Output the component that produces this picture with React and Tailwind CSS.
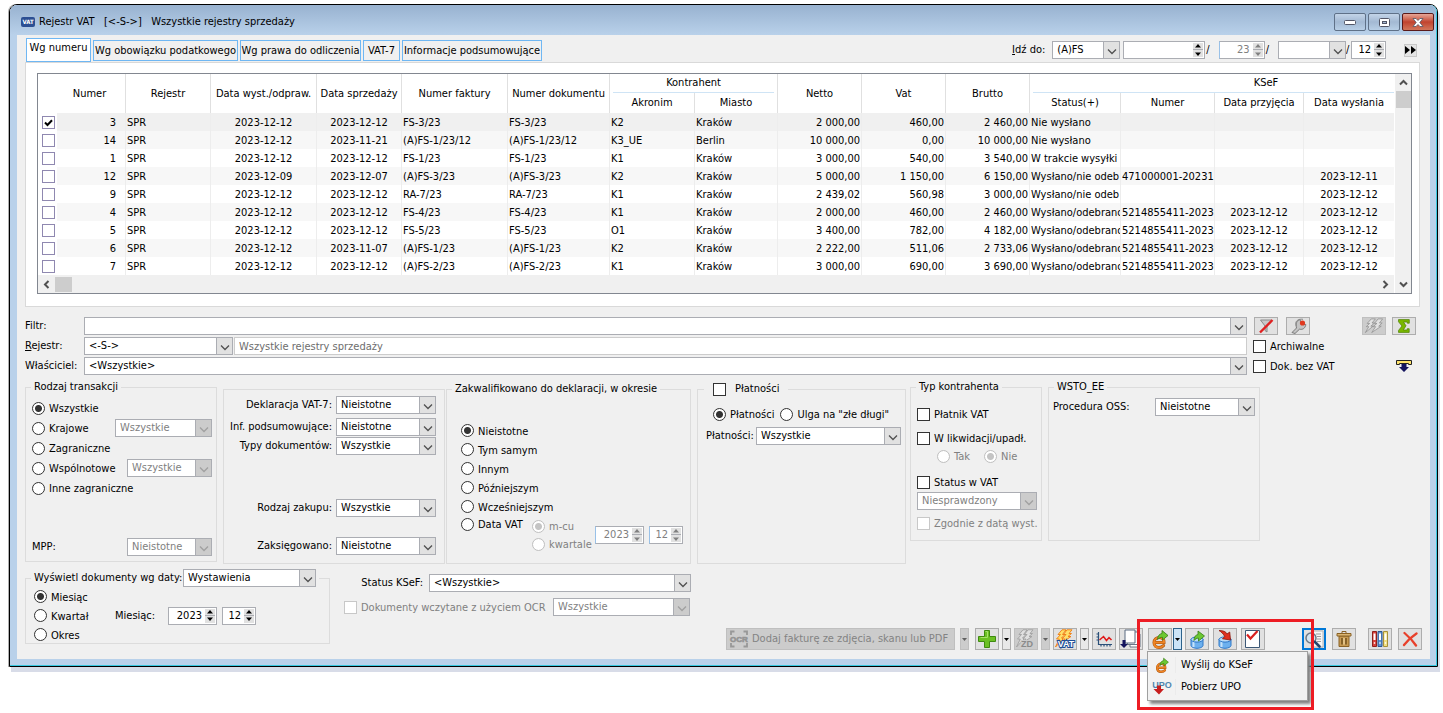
import React from "react";

const ROWS = [
  ["3", "SPR", "2023-12-12", "2023-12-12", "FS-3/23", "FS-3/23", "K2", "Kraków", "2 000,00", "460,00", "2 460,00", "Nie wysłano", "", "", ""],
  ["14", "SPR", "2023-12-12", "2023-11-21", "(A)FS-1/23/12", "(A)FS-1/23/12", "K3_UE", "Berlin", "10 000,00", "0,00", "10 000,00", "Nie wysłano", "", "", ""],
  ["1", "SPR", "2023-12-12", "2023-12-12", "FS-1/23", "FS-1/23", "K1", "Kraków", "3 000,00", "540,00", "3 540,00", "W trakcie wysyłki", "", "", ""],
  ["12", "SPR", "2023-12-09", "2023-12-07", "(A)FS-3/23", "(A)FS-3/23", "K2", "Kraków", "5 000,00", "1 150,00", "6 150,00", "Wysłano/nie odeb", "471000001-20231", "", "2023-12-11"],
  ["9", "SPR", "2023-12-12", "2023-12-12", "RA-7/23", "RA-7/23", "K1", "Kraków", "2 439,02", "560,98", "3 000,00", "Wysłano/nie odeb", "", "", "2023-12-12"],
  ["4", "SPR", "2023-12-12", "2023-12-12", "FS-4/23", "FS-4/23", "K1", "Kraków", "2 000,00", "460,00", "2 460,00", "Wysłano/odebrano", "5214855411-2023", "2023-12-12", "2023-12-12"],
  ["5", "SPR", "2023-12-12", "2023-12-12", "FS-5/23", "FS-5/23", "O1", "Kraków", "3 400,00", "782,00", "4 182,00", "Wysłano/odebrano", "5214855411-2023", "2023-12-12", "2023-12-12"],
  ["6", "SPR", "2023-12-12", "2023-11-07", "(A)FS-1/23", "(A)FS-1/23", "K2", "Kraków", "2 222,00", "511,06", "2 733,06", "Wysłano/odebrano", "5214855411-2023", "2023-12-12", "2023-12-12"],
  ["7", "SPR", "2023-12-12", "2023-12-12", "(A)FS-2/23", "(A)FS-2/23", "K1", "Kraków", "3 000,00", "690,00", "3 690,00", "Wysłano/odebrano", "5214855411-2023", "2023-12-12", "2023-12-12"],
];

const CELL = [
  "text-right pr-[9px]",
  "pl-px",
  "text-center",
  "text-center",
  "pl-px",
  "pl-px",
  "pl-px",
  "pl-px",
  "text-right pr-px",
  "text-right pr-px",
  "text-right pr-px",
  "pl-px",
  "pl-px",
  "text-center",
  "text-center",
];

function Chevron({ className = "" }) {
  return (
    <svg viewBox="0 0 10 7" className={`w-[10px] ${className}`} fill="none" stroke="currentColor" strokeWidth="1.3" aria-hidden="true">
      <path d="M1 1.500 5 5.500 9 1.500" />
    </svg>
  );
}

function Select({ value, label, id, className = "", disabled = false }) {
  return (
    <span className={`relative block shrink-0 ${className}`}>
      <select
        id={id}
        aria-label={label}
        disabled={disabled}
        defaultValue={value}
        className="block h-[18px] w-full appearance-none border border-[#abadb3] bg-white pr-4 pl-1 leading-4 text-black opacity-100 outline-none disabled:text-[#808080]"
      >
        <option>{value}</option>
      </select>
      <span
        className={`pointer-events-none absolute inset-y-0 right-0 flex w-[17px] items-center justify-center border border-[#abadb3] ${
          disabled ? "bg-[#cccccc] text-[#a0a0a0]" : "bg-[#e1e1e1] text-[#505050]"
        }`}
      >
        <Chevron className="mt-0.5" />
      </span>
    </span>
  );
}

function Spinner({ value = "", label, className = "", disabled = false }) {
  return (
    <span
      className={`flex h-[18px] shrink-0 border bg-white ${className} ${
        disabled ? "border-[#abadb3] border-l-[#99c1e8] text-[#808080]" : "border-[#abadb3] text-black"
      }`}
    >
      <input
        type="text"
        aria-label={label}
        defaultValue={value}
        disabled={disabled}
        className="min-w-0 flex-1 bg-transparent pr-[3px] text-right outline-none"
      />
      <span className="my-px mr-px grid w-[10px] grid-rows-2 bg-[#e1e1e1]">
        <button type="button" aria-label={`${label}: więcej`} disabled={disabled} className="flex items-center justify-center border-b border-[#abadb3]">
          <svg viewBox="0 0 6 4" className="w-[6px]" fill="currentColor"><path d="M3 0 6 3.500H0z" /></svg>
        </button>
        <button type="button" aria-label={`${label}: mniej`} disabled={disabled} className="flex items-center justify-center">
          <svg viewBox="0 0 6 4" className="w-[6px]" fill="currentColor"><path d="M3 4 0 .5h6z" /></svg>
        </button>
      </span>
    </span>
  );
}

function Radio({ name, children, checked = false, disabled = false, className = "" }) {
  return (
    <label className={`flex items-center gap-1 whitespace-nowrap ${disabled ? "text-[#808080]" : ""} ${className}`}>
      <input
        type="radio"
        name={name}
        defaultChecked={checked}
        disabled={disabled}
        className="size-[13px] shrink-0 appearance-none rounded-full border border-[#333333] bg-white bg-clip-padding checked:bg-[radial-gradient(circle,#333333_0_3px,#ffffff_4px)] disabled:border-[#c0c0c0] disabled:checked:bg-[radial-gradient(circle,#c4c4c4_0_3px,#ffffff_4px)]"
      />
      <span className="pt-0.5">{children}</span>
    </label>
  );
}

function Check({ children, disabled = false, className = "" }) {
  return (
    <label className={`flex items-center gap-1 whitespace-nowrap ${disabled ? "text-[#808080]" : ""} ${className}`}>
      <input
        type="checkbox"
        disabled={disabled}
        className="size-[13px] shrink-0 appearance-none border border-[#333333] bg-white disabled:border-[#c8c8c8]"
      />
      <span className="pt-0.5">{children}</span>
    </label>
  );
}

function Group({ legend, className = "", children }) {
  return (
    <fieldset className={`shrink-0 border border-[#dcdcdc] ${className}`}>
      <legend className="ml-[5px] px-[3px] leading-[14px]">{legend}</legend>
      {children}
    </fieldset>
  );
}

function ToolButton({ label, children, className = "border border-[#adadad] bg-[#e1e1e1]", small = false, ...rest }) {
  return (
    <button
      type="button"
      aria-label={label}
      className={`flex shrink-0 items-center justify-center overflow-hidden ${small ? "h-[18px]" : "h-[22px]"} w-6 ${className}`}
      {...rest}
    >
      {children}
    </button>
  );
}

function DropButton({ label, className = "border-[#adadad] bg-[#e8e8e8]", disabled = false }) {
  return (
    <button
      type="button"
      aria-label={label}
      disabled={disabled}
      className={`flex h-[22px] w-[9px] shrink-0 items-center justify-center border ${className}`}
    >
      <svg viewBox="0 0 5 3" className="w-[5px]" fill="currentColor"><path d="M0 0h5L2.500 3z" /></svg>
    </button>
  );
}

function EArrow({ className }) {
  return (
    <svg viewBox="0 0 20 20" className={`shrink-0 ${className}`} aria-hidden="true">
      <path d="M4.500 13.500H14c.2-3.200-1.800-5-4.700-5-3 0-5.300 2-5.300 5s2 5 5 5c2 0 3.600-.7 4.600-2" fill="none" stroke="#a8520e" strokeWidth="3" strokeLinecap="round" />
      <path d="M4.500 13.500H14c.2-3.200-1.800-5-4.700-5-3 0-5.300 2-5.300 5s2 5 5 5c2 0 3.600-.7 4.600-2" fill="none" stroke="#ee8424" strokeWidth="2" strokeLinecap="round" />
      <path d="M7.500 10.500C7.800 6.800 9.200 5 12 4.500V1.500l6 5-5.500 4.500V8.300c-1.900 0-3.300.6-5 2.200z" fill="#6cc832" stroke="#347a12" strokeWidth=".8" />
    </svg>
  );
}

function Cylinder({ red = false }) {
  return (
    <svg viewBox="0 0 22 20" className="w-[22px]" aria-hidden="true">
      <path d="M5 10v6.500C5 18 8 19.300 11 19.300s6-1.300 6-2.800V10z" fill="#6db0ee" stroke="#2f78c8" />
      <path d="M7.500 12v6" stroke="#c6e2fb" strokeWidth="2" />
      <ellipse cx="11" cy="10.500" rx="6" ry="2.600" fill="#b9dbf8" stroke="#2f78c8" />
      {red ? (
        <path d="M5 1.500C9 1.500 12 2.500 13 5l2.700-2L16.500 11l-8-1.200 2.200-2.300C9.500 5 7.500 3 5 1.500z" fill="#e03020" stroke="#8a1408" strokeWidth=".8" />
      ) : (
        <path d="M8 11.500c0-3.500 1.300-5.300 4-6V2l6.500 5-6 5V9.200c-1.800 0-3 .6-4.500 2.300z" fill="#6cc832" stroke="#347a12" strokeWidth=".8" />
      )}
    </svg>
  );
}

function Bolts({ front, edge, className }) {
  return (
    <svg viewBox="0 0 22 18" className={className} aria-hidden="true">
      <path d="M8 1 3.500 6h2.700L2.500 9.500h2.800L1.500 16 10 9H7.500l4-3.500H8.800L12.500 1z" fill={front} stroke={edge} strokeWidth=".8" />
      <path d="M15.500 1 11.500 6h2.700L10 9.500h2.800L8.500 16 19 9h-2.800L20 5.500h-3L20.500 1z" fill={front} stroke={edge} strokeWidth=".8" />
    </svg>
  );
}

function BoltText({ text, bolt, edge, fill, outline }) {
  return (
    <svg viewBox="0 0 22 20" className="w-[22px]" aria-hidden="true">
      <path d="M8 .8 4 5.500h2.500L2.500 10h2.800L1.500 18 10 9H7.500L11 5.500H8.500L12 .8z" fill={bolt} stroke={edge} strokeWidth=".9" />
      <path d="M13 .8 9.500 5.500H12L8 10h3L9 13l8-5.500h-3l3.500-3H15L18 .8z" fill={bolt} stroke={edge} strokeWidth=".9" />
      <text x="12" y="18" textAnchor="middle" fontSize="9" fontWeight="bold" fontFamily="Liberation Sans, sans-serif" fill={fill} stroke={outline} strokeWidth="2" paintOrder="stroke">
        {text}
      </text>
    </svg>
  );
}

function TitleBar() {
  const btn = "flex h-[18px] w-8 items-center justify-center rounded-[2px] border";
  return (
    <header className="flex h-[30px] items-center bg-linear-to-b from-[#98b2d0] to-[#b9d1ea] pt-1 pr-0.5 pl-[11px]">
      <span className="flex h-[10px] w-[14px] items-center justify-center rounded-[2px] bg-[#2c4f93] text-[6px] leading-none font-bold text-white" aria-hidden="true">VAT</span>
      <h1 className="flex-1 pl-1 whitespace-pre">Rejestr VAT   [&lt;-S-&gt;]   Wszystkie rejestry sprzedaży</h1>
      <div className="flex gap-0.5">
        <button type="button" aria-label="Minimalizuj" className={`${btn} border-[#5f7188] bg-linear-to-b from-[#c3d4e8] via-[#a3b9d3] to-[#b8cfe6]`}>
          <svg viewBox="0 0 12 5" className="w-3"><rect x=".5" y=".5" width="11" height="4" rx="1" fill="#fff" stroke="#535666" /></svg>
        </button>
        <button type="button" aria-label="Maksymalizuj" className={`${btn} border-[#5f7188] bg-linear-to-b from-[#c3d4e8] via-[#a3b9d3] to-[#b8cfe6]`}>
          <svg viewBox="0 0 11 9" className="w-[11px]"><rect x=".5" y=".5" width="10" height="8" rx="1" fill="#fff" stroke="#535666" /><rect x="3.500" y="3.500" width="4" height="2" fill="#a3b9d3" stroke="#535666" /></svg>
        </button>
        <button type="button" aria-label="Zamknij" className={`${btn} border-[#5b1a1a] bg-linear-to-b from-[#e6a597] via-[#c0432f] to-[#d1755a]`}>
          <svg viewBox="0 0 12 9" className="w-3"><path d="M1 .5h3l2 2 2-2h3L7.800 4.500 11 8.500H8l-2-2-2 2H1l3.200-4z" fill="#fff" stroke="#535666" strokeWidth=".8" /></svg>
        </button>
      </div>
    </header>
  );
}

function TabRow() {
  const tabs = ["Wg obowiązku podatkowego", "Wg prawa do odliczenia", "VAT-7", "Informacje podsumowujące"];
  const widths = ["w-[145px]", "w-[121px]", "w-[37px]", "w-[140px]"];
  return (
    <div className="flex h-[27px] items-end pr-0.5">
      <div role="tablist" className="flex flex-1 items-end gap-0.5 pl-px">
        <button type="button" role="tab" aria-selected="true" className="h-6 w-[65px] border border-[#6fb7f3] bg-white pb-1 whitespace-nowrap">Wg numeru</button>
        {tabs.map((t, i) => (
          <button key={t} type="button" role="tab" aria-selected="false" className={`mb-px h-[21px] border border-[#6fb7f3] whitespace-nowrap ${widths[i]}`}>{t}</button>
        ))}
      </div>
      <div className="mb-[3px] flex items-center gap-[3px] pr-[3px]">
        <label htmlFor="goto" className="pr-1"><u>I</u>dź do:</label>
        <Select id="goto" value="(A)FS" className="w-[68px]" />
        <div className="flex items-center gap-px"><Spinner label="Numer" className="w-[82px]" /><span>/</span></div>
        <div className="flex items-center gap-px pl-1.5"><Spinner label="Rok" value="23" disabled className="w-[46px]" /><span>/</span></div>
        <div className="flex items-center pl-1.5"><Select label="Seria" value="" className="w-[68px]" /><span className="w-0.5">/</span></div>
        <Spinner label="Miesiąc" value="12" className="w-[35px]" />
        <button type="button" aria-label="Dalej" className="ml-[15px] flex h-[13px] w-[13px] items-center justify-center border border-[#c8c8c8] bg-[#e4e4e4]">
          <svg viewBox="0 0 11 8" className="w-[11px]"><path d="M0 0 5 4 0 8zM6 0l5 4-5 4z" /></svg>
        </button>
      </div>
    </div>
  );
}

function RegistryTable() {
  const th = "border-r border-[#e0e0e0] font-normal text-center overflow-hidden whitespace-nowrap p-0";
  return (
    <div className="mr-0.5 border border-[#d9d9d9] bg-white pt-[10px] pr-[7px] pb-3 pl-[11px]">
      <div className="flex border border-[#828790]">
        <div className="min-w-0 flex-1">
          <table className="w-full table-fixed border-separate border-spacing-0 border-b border-[#f0f0f0]">
            <colgroup>
              <col className="w-[19px]" />
              <col className="w-[69px]" />
              <col className="w-[85px]" />
              <col className="w-[106px]" />
              <col className="w-[85px]" />
              <col className="w-[106px]" />
              <col className="w-[102px]" />
              <col className="w-[85px]" />
              <col className="w-[83px]" />
              <col className="w-[84px]" />
              <col className="w-[84px]" />
              <col className="w-[84px]" />
              <col className="w-[91px]" />
              <col className="w-[94px]" />
              <col className="w-[89px]" />
              <col className="w-[91px]" />
            </colgroup>
            <thead>
              <tr className="h-[19px]">
                <th rowSpan={2} colSpan={2} scope="col" className={`${th} pl-4`}>Numer</th>
                <th rowSpan={2} scope="col" className={th}>Rejestr</th>
                <th rowSpan={2} scope="col" className={th}>Data wyst./odpraw.</th>
                <th rowSpan={2} scope="col" className={th}>Data sprzedaży</th>
                <th rowSpan={2} scope="col" className={th}>Numer faktury</th>
                <th rowSpan={2} scope="col" className={th}>Numer dokumentu</th>
                <th colSpan={2} scope="colgroup" className={th}><div className="mx-[3px] border-b border-[#cfe4f5] leading-[18px]">Kontrahent</div></th>
                <th rowSpan={2} scope="col" className={th}>Netto</th>
                <th rowSpan={2} scope="col" className={th}>Vat</th>
                <th rowSpan={2} scope="col" className={th}>Brutto</th>
                <th colSpan={4} scope="colgroup" className={th}><div className="ml-[3px] border-b border-[#cfe4f5] pl-[105px] leading-[18px]">KSeF</div></th>
              </tr>
              <tr className="h-5">
                <th scope="col" className={th}>Akronim</th>
                <th scope="col" className={th}>Miasto</th>
                <th scope="col" className={th}>Status(+)</th>
                <th scope="col" className={th}>Numer</th>
                <th scope="col" className={th}>Data przyjęcia</th>
                <th scope="col" className={th}>Data wysłania</th>
              </tr>
            </thead>
            <tbody>
              {ROWS.map((row, r) => {
                const bg = r === 0 ? "bg-[#f0f0f0]" : r % 2 ? "bg-[#f7f7f7]" : "bg-white";
                return (
                  <tr key={row[0]} className="h-[18px]">
                    <td className="p-0 pl-1">
                      <label className="relative block size-[13px]">
                        <input
                          type="checkbox"
                          aria-label={`Zaznacz ${row[0]}`}
                          defaultChecked={r === 0}
                          className="peer block size-[13px] appearance-none border border-[#8f88b0] bg-white"
                        />
                        <svg viewBox="0 0 9 8" className="pointer-events-none absolute top-[3px] left-0.5 hidden w-[9px] peer-checked:block" fill="none" stroke="#000" strokeWidth="2">
                          <path d="M1 3.500 3.500 6 8 1.200" />
                        </svg>
                      </label>
                    </td>
                    {row.map((c, i) => (
                      <td key={i} className={`overflow-hidden border-r border-[#ededed] pt-0.5 pb-0 leading-4 whitespace-nowrap ${bg} ${CELL[i]}`}>{c}</td>
                    ))}
                  </tr>
                );
              })}
            </tbody>
          </table>
          <div className="flex h-[17px] items-center bg-[#f0f0f0] text-[#505050]">
            <svg viewBox="0 0 17 17" className="w-[17px]" fill="none" stroke="currentColor" strokeWidth="2"><path d="M10.500 5 7 8.500l3.500 3.500" /></svg>
            <span className="h-[15px] w-[17px] bg-[#cdcdcd]" />
            <svg viewBox="0 0 17 17" className="ml-auto w-[17px]" fill="none" stroke="currentColor" strokeWidth="2"><path d="M6.500 5 10 8.500 6.500 12" /></svg>
          </div>
        </div>
        <div className="flex w-[17px] flex-col items-center border-l border-white bg-[#f0f0f0] text-[#505050]">
          <svg viewBox="0 0 17 17" className="w-[17px]" fill="none" stroke="currentColor" strokeWidth="2"><path d="M5 10.500 8.500 7l3.500 3.500" /></svg>
          <span className="h-[17px] w-[15px] bg-[#cdcdcd]" />
          <svg viewBox="0 0 17 17" className="mt-auto w-[17px]" fill="none" stroke="currentColor" strokeWidth="2"><path d="M5 6.500 8.500 10 12 6.500" /></svg>
        </div>
      </div>
    </div>
  );
}

function Filters() {
  const row = "flex h-[18px] items-center";
  return (
    <div className="mt-[10px] flex flex-col gap-0.5 pr-1.5">
      <div className={row}>
        <label htmlFor="filtr" className="w-[59px] shrink-0">Filtr:</label>
        <Select id="filtr" value="" className="flex-1" />
        <div className="flex w-[169px] shrink-0 items-center pl-[7px]">
          <ToolButton small label="Wyczyść filtr">
            <svg viewBox="0 0 20 16" className="w-5"><path d="M4.500 2h11L11 8v6L9 12.500V8z" fill="#c8c8c8" stroke="#8a8a8a" /><path d="M4 14.500 16.500 2" stroke="#e02020" strokeWidth="2.400" /></svg>
          </ToolButton>
          <ToolButton small label="Konfiguracja filtra" className="ml-2 border border-[#adadad] bg-[#e1e1e1]">
            <svg viewBox="0 0 20 16" className="w-5"><path d="M4 14.500 8.500 10C7.500 6 8.500 2.500 12 1.500l1 3.500 1.800 1.600 3-.1c-.3 3.500-3 5.500-6.300 4.700L7 15.500z" fill="#c4c4c4" stroke="#7a7a7a" /><path d="M8.500 8.500C6 3.500 10 .5 15 1.300" fill="none" stroke="#8a8a8a" /><circle cx="14.500" cy="5" r="2.600" fill="#e03a20" /></svg>
          </ToolButton>
          <ToolButton small disabled label="Szybkie akcje" className="ml-auto border border-[#bfbfbf] bg-[#cccccc]">
            <Bolts front="#e2e2e2" edge="#8c8c8c" className="w-5" />
          </ToolButton>
          <ToolButton small label="Suma" className="ml-1.5 border border-[#adadad] bg-[#e1e1e1]">
            <svg viewBox="0 0 14 14" className="w-[14px]"><path d="M1.500.6h10.800v3.600h-2V3H6.500L9 6.800 6.300 11H10.200V9.700h2v3.700H1.500v-2L5 7 1.500 2.800z" fill="#7ab800" stroke="#4c7f00" strokeWidth=".7" /></svg>
          </ToolButton>
        </div>
      </div>
      <div className={row}>
        <label htmlFor="rejestr" className="w-[59px] shrink-0"><u>R</u>ejestr:</label>
        <Select id="rejestr" value="<-S->" className="w-[149px]" />
        <input
          type="text"
          readOnly
          aria-label="Nazwa rejestru"
          defaultValue="Wszystkie rejestry sprzedaży"
          className="ml-px h-[18px] min-w-0 flex-1 border border-[#cccccc] bg-white pl-1 text-[#6d6d6d] outline-none"
        />
        <Check className="w-[169px] shrink-0 pl-1.5">Archiwalne</Check>
      </div>
      <div className={row}>
        <label htmlFor="wlasciciel" className="w-[59px] shrink-0">Właściciel:</label>
        <Select id="wlasciciel" value="<Wszystkie>" className="flex-1" />
        <div className="flex w-[169px] shrink-0 items-center justify-between pr-1 pl-1.5">
          <Check>Dok. bez VAT</Check>
          <button type="button" aria-label="Rozwiń">
            <svg viewBox="0 0 16 12" className="w-4"><path d="M.5.5h15v4h-3v-1h-9v1h-3z" fill="#ffe36b" stroke="#222" /><path d="M5.500 4h5v3H13l-5 5-5-5h2.500z" fill="#14145e" /></svg>
          </button>
        </div>
      </div>
    </div>
  );
}

function LabeledSelect({ id, label, value, className = "" }) {
  return (
    <div className={`flex items-center justify-end gap-1 ${className}`}>
      <label htmlFor={id} className="whitespace-nowrap">{label}</label>
      <Select id={id} value={value} className="w-[100px]" />
    </div>
  );
}

function Criteria() {
  const radioRow = "flex h-5 items-center justify-between pr-1";
  return (
    <div className="mt-[5px] flex items-start">
      <Group legend="Rodzaj transakcji" className="h-[182px] w-[192px]">
        <div className="flex h-[166px] flex-col pt-1 pb-1 pl-1.5">
          <div className={radioRow}><Radio name="rodzaj" checked>Wszystkie</Radio></div>
          <div className={radioRow}><Radio name="rodzaj">Krajowe</Radio><Select label="Krajowe" value="Wszystkie" disabled className="w-[97px]" /></div>
          <div className={radioRow}><Radio name="rodzaj">Zagraniczne</Radio></div>
          <div className={radioRow}><Radio name="rodzaj">Wspólnotowe</Radio><Select label="Wspólnotowe" value="Wszystkie" disabled className="w-[85px]" /></div>
          <div className={radioRow}><Radio name="rodzaj">Inne zagraniczne</Radio></div>
          <div className="mt-auto flex items-center justify-between pr-1">
            <label htmlFor="mpp">MPP:</label>
            <Select id="mpp" value="Nieistotne" disabled className="w-[85px]" />
          </div>
        </div>
      </Group>
      <div className="mt-[9px] ml-1.5 flex h-[175px] w-[222px] shrink-0 flex-col border border-[#dcdcdc] pt-1.5 pr-2">
        <LabeledSelect id="vat7" label="Deklaracja VAT-7:" value="Nieistotne" />
        <LabeledSelect id="inf" label="Inf. podsumowujące:" value="Nieistotne" className="mt-1" />
        <LabeledSelect id="typy" label="Typy dokumentów:" value="Wszystkie" className="mt-px" />
        <LabeledSelect id="zakup" label="Rodzaj zakupu:" value="Wszystkie" className="mt-11" />
        <LabeledSelect id="zaks" label="Zaksięgowano:" value="Nieistotne" className="mt-5" />
      </div>
      <Group legend="Zakwalifikowano do deklaracji, w okresie" className="mt-0.5 ml-px h-[182px] w-[245px]">
        <div className="flex flex-col pt-[25px] pl-3.5">
          {["Nieistotne", "Tym samym", "Innym", "Późniejszym", "Wcześniejszym"].map((t, i) => (
            <Radio key={t} name="okres" checked={i === 0} className="h-[19px]">{t}</Radio>
          ))}
          <div className="flex items-start">
            <Radio name="okres" className="h-4 w-[71px]">Data VAT</Radio>
            <div className="flex items-center gap-[5px] pt-px">
              <div className="w-[58px]">
                <Radio name="vatokres" checked disabled className="h-[18px]">m-cu</Radio>
                <Radio name="vatokres" disabled className="h-[18px]">kwartale</Radio>
              </div>
              <Spinner label="Rok VAT" value="2023" disabled className="w-[49px]" />
              <Spinner label="Miesiąc VAT" value="12" disabled className="w-[34px]" />
            </div>
          </div>
        </div>
      </Group>
      <fieldset className="mt-0.5 ml-1.5 h-[182px] w-[209px] shrink-0 border border-[#dcdcdc]">
        <legend className="ml-1.5 px-[9px]">
          <label className="flex h-[14px] items-center gap-[9px] leading-[14px]">
            <input type="checkbox" className="size-[13px] appearance-none border border-[#333333] bg-white" />
            Płatności
          </label>
        </legend>
        <div className="mt-[9px] flex h-[18px] items-center gap-1.5 pl-[15px]">
          <Radio name="plat" checked>Płatności</Radio>
          <Radio name="plat">Ulga na "złe długi"</Radio>
        </div>
        <div className="mt-1 flex items-center justify-between pr-1 pl-2">
          <label htmlFor="platnosci">Płatności:</label>
          <Select id="platnosci" value="Wszystkie" className="w-[145px]" />
        </div>
      </fieldset>
      <Group legend="Typ kontrahenta" className="ml-1 h-[161px] w-[132px]">
        <div className="flex flex-col pt-[11px] pl-1.5">
          <Check className="h-[18px]">Płatnik VAT</Check>
          <Check className="mt-1.5 h-[18px]">W likwidacji/upadł.</Check>
          <div className="flex h-[18px] gap-3.5 pl-5">
            <Radio name="likw" disabled>Tak</Radio>
            <Radio name="likw" disabled checked>Nie</Radio>
          </div>
          <Check className="mt-2 h-[18px]">Status w VAT</Check>
          <Select label="Status w VAT" value="Niesprawdzony" disabled className="mt-px mr-1" />
          <Check disabled className="mt-1 h-[18px]">Zgodnie z datą wyst.</Check>
        </div>
      </Group>
      <Group legend="WSTO_EE" className="ml-1.5 h-[161px] w-[212px]">
        <div className="flex items-center justify-between pt-1 pr-1 pl-1">
          <label htmlFor="oss">Procedura OSS:</label>
          <Select id="oss" value="Nieistotne" className="w-[100px]" />
        </div>
      </Group>
    </div>
  );
}

function KsefButton() {
  return (
    <div className="relative z-20 ml-[5px] flex gap-px">
      <ToolButton label="Wyślij do KSeF"><EArrow className="w-5" /></ToolButton>
      <DropButton label="KSeF - menu" className="border-[#2c628b] bg-[#cce4f7]" />
      <div role="menu" className="absolute top-[23px] -left-px w-[161px] border border-[#a0a0a0] bg-[#f2f2f2] py-0.5 shadow-[3px_3px_3px_#808080]">
        <button type="button" role="menuitem" className="flex h-[22px] w-full items-center">
          <span className="flex w-7 justify-center border-r border-[#ebebeb]"><EArrow className="w-4" /></span>
          <span className="pl-[5px]">Wyślij do KSeF</span>
        </button>
        <button type="button" role="menuitem" className="flex h-[22px] w-full items-center">
          <span className="flex w-7 justify-center border-r border-[#ebebeb]">
            <svg viewBox="0 0 20 16" className="w-5 shrink-0" aria-hidden="true">
              <text x="10" y="9" textAnchor="middle" fontSize="9" fontWeight="bold" fontFamily="Liberation Sans, sans-serif" fill="#4f86ae">UPO</text>
              <path d="M5 6.500h4V10h3l-5 5.500L1.500 10H5z" fill="#c81e1e" />
            </svg>
          </span>
          <span className="pl-[5px]">Pobierz UPO</span>
        </button>
      </div>
      <div className="pointer-events-none absolute -top-[9px] -left-[11px] h-[91px] w-[177px] border-3 border-[#ed1c24]" />
    </div>
  );
}

function Toolbar() {
  const off = "border border-[#bfbfbf] bg-[#cccccc] text-[#838383]";
  return (
    <div className="mt-3 flex justify-end">
      <button type="button" disabled className={`flex h-[22px] w-[229px] shrink-0 items-center gap-[3px] pl-0.5 ${off}`}>
        <svg viewBox="0 0 20 18" className="w-5 shrink-0" aria-hidden="true">
          <path d="M2 5V1.500h3.500M14.500 1.500H18V5M2 13v3.500h3.500M14.500 16.500H18V13" fill="none" stroke="#989898" strokeWidth="1.800" />
          <text x="10" y="12" textAnchor="middle" fontSize="8" fontWeight="bold" fontFamily="Liberation Sans, sans-serif" fill="#949494" stroke="#949494" strokeWidth=".6">OCR</text>
        </svg>
        <span className="whitespace-nowrap">Dodaj fakturę ze zdjęcia, skanu lub PDF</span>
      </button>
      <div className="flex pl-[5px]"><DropButton label="OCR - menu" disabled className="border-[#bfbfbf] bg-[#cccccc] text-[#606060]" /></div>
      <div className="flex gap-[3px] pl-1.5">
        <ToolButton label="Dodaj">
          <svg viewBox="0 0 20 20" className="w-5"><path d="M7.500 1.500h5v6h6v5h-6v6h-5v-6h-6v-5h6z" fill="#6cc024" stroke="#3f8a10" /><path d="M8.500 2.500h2v6h-7" fill="none" stroke="#a6e26a" /></svg>
        </ToolButton>
        <DropButton label="Dodaj - menu" />
        <ToolButton label="ZD" disabled className={off}><BoltText text="ZD" bolt="#e0e0e0" edge="#a0a0a0" fill="#8a8a8a" outline="#cccccc" /></ToolButton>
        <DropButton label="ZD - menu" disabled className="border-[#bfbfbf] bg-[#cccccc] text-[#606060]" />
        <ToolButton label="VAT"><BoltText text="VAT" bolt="#ffe06a" edge="#f07c10" fill="#ffffff" outline="#1f4f96" /></ToolButton>
        <DropButton label="VAT - menu" />
        <ToolButton label="Wykres">
          <svg viewBox="0 0 18 18" className="w-[18px]"><path d="M3.500 2v12.500H17M1.500 4h2M1.500 7h2M1.500 10h2M6 14.500v2M9 14.500v2M12 14.500v2M15 14.500v2" fill="none" stroke="#2a4f78" strokeWidth="1.200" /><path d="m4.500 10 4-3.500 3 4 2.500-3 2.500 2.500" fill="none" stroke="#e01818" strokeWidth="1.500" /></svg>
        </ToolButton>
        <ToolButton label="Kopiuj dokumenty">
          <svg viewBox="0 0 22 20" className="w-[22px]"><path d="M10 5h10v13H10z" fill="#fff" stroke="#6a7686" /><path d="M7.500 3h10v12.500h-10z" fill="#fff" stroke="#6a7686" /><path d="M5 1h10v13H5z" fill="#fff" stroke="#5b6a80" /><path d="M2.500 11h3v4H8l-4 4-4-4h2.500z" fill="#14145e" /></svg>
        </ToolButton>
      </div>
      <KsefButton />
      <div className="flex gap-1 pl-[3px]">
        <ToolButton label="Wyślij"><Cylinder /></ToolButton>
        <ToolButton label="Pobierz"><Cylinder red /></ToolButton>
        <ToolButton label="Zatwierdź">
          <svg viewBox="0 0 18 20" className="w-[18px]"><path d="M1.500 1.500h14v17h-14z" fill="#fff" stroke="#3c5876" /><path d="m3 5.500 3.500 4L13.500 2" fill="none" stroke="#d82020" strokeWidth="2.200" /></svg>
        </ToolButton>
      </div>
      <div className="flex gap-1.5 pl-[37px]">
        <ToolButton label="Podgląd" className="border-2 border-[#0078d7] bg-[#e1e1e1]">
          <svg viewBox="0 0 20 18" className="w-5"><path d="M8 1h11v16H8z" fill="#f7f7f7" stroke="#b4b4b4" /><path d="M12 4h5M13 6.500h4M13 9h4M13 11.500h4" stroke="#9a9a9a" /><circle cx="7" cy="8" r="5" fill="#d3e4f2" fillOpacity=".9" stroke="#6d7986" strokeWidth="1.500" /><path d="m11 12 4.500 4.500" stroke="#23476e" strokeWidth="2.600" strokeLinecap="round" /></svg>
        </ToolButton>
        <ToolButton label="Usuń">
          <svg viewBox="0 0 18 18" className="w-[18px]"><path d="M4 6h10v10.500H4z" fill="#c79a52" stroke="#8a6226" /><path d="M2 3.500h14V6H2z" fill="#dcb672" stroke="#8a6226" /><path d="M7 3.500v-2h4v2" fill="none" stroke="#8a6226" /><path d="M7 8v6.500M11 8v6.500" stroke="#6b4a18" strokeWidth="1.400" /><path d="M9 8v6.500" stroke="#eed29a" strokeWidth="1.400" /></svg>
        </ToolButton>
      </div>
      <div className="flex gap-1.5 pl-3">
        <ToolButton label="Segregatory">
          <svg viewBox="0 0 18 18" className="w-[18px]">
            <path d="M1.500 1.500h4v15h-4z" fill="#d8403a" stroke="#8e1f1b" />
            <path d="M7 1.500h4v15H7z" fill="#5f95d6" stroke="#2b5590" />
            <path d="M12.500 1.500h4v15h-4z" fill="#f1df80" stroke="#a8913a" />
            <path d="M3.500 3.500V10M9 3.500V10M14.500 3.500V10" stroke="#fff" strokeWidth="2" />
            <path d="M2.800 13h1.400M8.300 13h1.400M13.800 13h1.400" stroke="#fff" strokeWidth="1.600" />
          </svg>
        </ToolButton>
        <ToolButton label="Zamknij okno">
          <svg viewBox="0 0 16 16" className="w-4"><path d="M2.500 2C6 5 11 10 14 14.500M14.500 2.500C10 5.500 5.500 9.500 2 14" fill="none" stroke="#e8402a" strokeWidth="2.300" strokeLinecap="round" /></svg>
        </ToolButton>
      </div>
    </div>
  );
}

function Footer() {
  return (
    <div className="mt-[5px] flex items-start">
      <fieldset className="h-[75px] w-[305px] shrink-0 border border-[#dcdcdc]">
        <legend className="ml-[5px] px-[3px]">
          <div className="flex items-center gap-1">
            <label htmlFor="wgdaty" className="w-[145px] whitespace-nowrap">Wyświetl dokumenty wg daty:</label>
            <Select id="wgdaty" value="Wystawienia" className="w-[133px]" />
          </div>
        </legend>
        <div className="flex flex-col pl-2">
          <Radio name="data" checked className="h-[19px]">Miesiąc</Radio>
          <div className="flex h-[19px] items-center">
            <Radio name="data" className="w-[81px]">Kwartał</Radio>
            <span className="w-[53px]">Miesiąc:</span>
            <Spinner label="Rok" value="2023" className="w-[49px]" />
            <Spinner label="Miesiąc" value="12" className="ml-[5px] w-[34px]" />
          </div>
          <Radio name="data" className="h-[19px]">Okres</Radio>
        </div>
      </fieldset>
      <div className="min-w-0 flex-1 pt-[5px]">
        <div className="ml-3.5 flex w-[347px] flex-col gap-1.5">
          <div className="flex items-center gap-1.5">
            <label htmlFor="ksef" className="w-[79px] text-right whitespace-nowrap">Status KSeF:</label>
            <Select id="ksef" value="<Wszystkie>" className="flex-1" />
          </div>
          <div className="flex items-center justify-between pr-px">
            <Check disabled>Dokumenty wczytane z użyciem OCR</Check>
            <Select label="Dokumenty OCR" value="Wszystkie" disabled className="w-[137px]" />
          </div>
        </div>
        <Toolbar />
      </div>
    </div>
  );
}

export default function App() {
  return (
    <div className="min-h-screen bg-white pt-1 pr-[5px] pl-[9px] font-['DejaVu_Sans_Condensed','Liberation_Sans',sans-serif] text-[11px] leading-[14px] text-black">
      <main className="rounded-t-lg border border-black shadow-[2px_5px_0_#d8dce8,-1px_0_0_#b0b0b0]">
        <div className="rounded-t-[7px] border-r border-b border-[#38c8e0] bg-[#b9d1ea]">
          <div className="overflow-hidden rounded-t-[7px]">
            <TitleBar />
          </div>
          <div className="pr-1.5 pb-1.5 pl-[7px]">
            <div className="bg-[#f0f0f0] pr-2 pb-[9px] pl-2">
              <TabRow />
              <RegistryTable />
              <Filters />
              <Criteria />
              <Footer />
            </div>
          </div>
        </div>
      </main>
    </div>
  );
}
